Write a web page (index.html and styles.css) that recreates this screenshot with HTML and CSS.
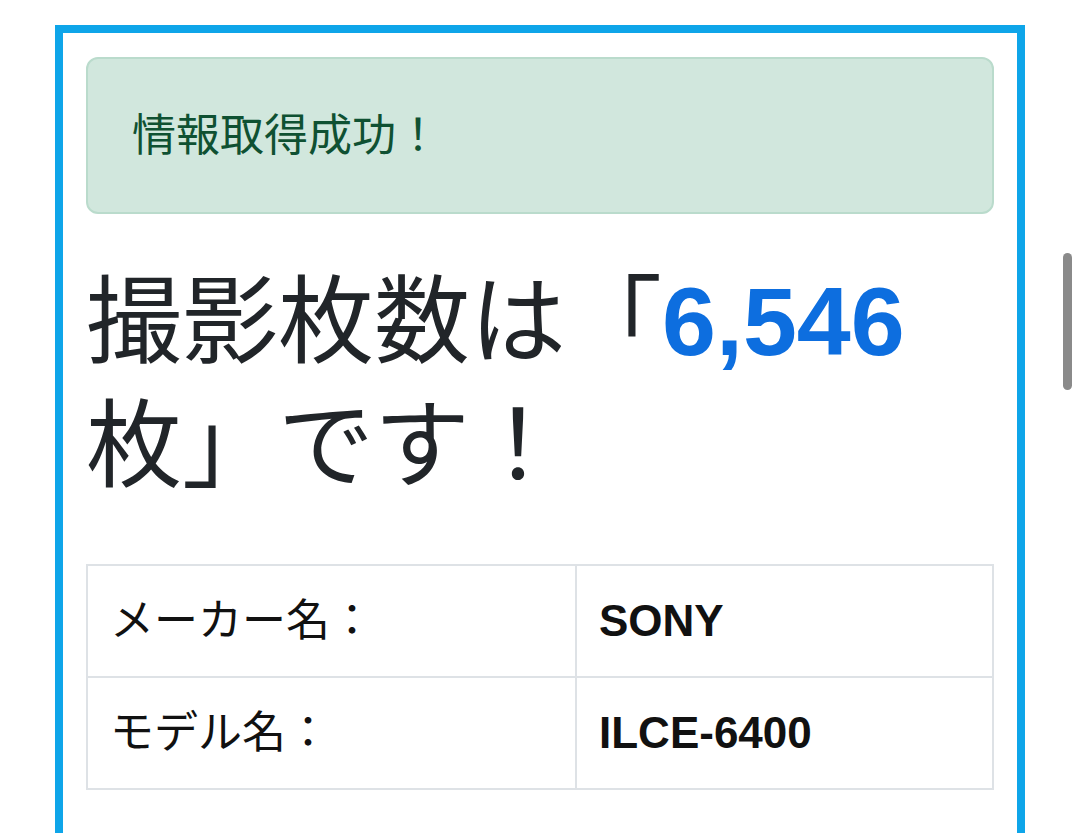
FILE: index.html
```html
<!DOCTYPE html>
<html lang="ja">
<head>
	<meta charset="utf-8">
	<title>撮影枚数チェッカー</title>
	<link rel="stylesheet" href="styles.css">
</head>
<body>
	<div class="result_box">
		<div class="alert_success">情報取得成功！</div>

		<h1 class="shot_count">撮影枚数は「<span class="shot_count_value">6,546</span>枚」です！</h1>

		<table class="camera_info">
			<tr>
				<td class="camera_info_key">メーカー名：</td>
				<td class="camera_info_value">SONY</td>
			</tr>
			<tr>
				<td class="camera_info_key">モデル名：</td>
				<td class="camera_info_value">ILCE-6400</td>
			</tr>
		</table>
	</div>

	<div class="scroll_thumb"></div>
</body>
</html>
```

FILE: styles.css
```css
html, body {
	height: 100%;
	overflow: hidden;
}

body {
	margin: 0;
	padding-top: 25px;
	background-color: #FFFFFF;
	color: #212529;
	font-family: "Liberation Sans", "Noto Sans CJK JP", sans-serif;
	font-size: 44px;
}

.result_box {
	width: 970px;
	margin: 0 auto;
	padding: 24px 23px 80px 23px;
	border: 8px solid #0EA5E9;
	box-sizing: border-box;
}

.alert_success {
	padding: 44px 44px;
	line-height: 65px;
	color: #0F5132;
	background-color: #D1E7DD;
	border: 2px solid #BADBCC;
	border-radius: 12px;
	margin-bottom: 46px;
}

.shot_count {
	margin: 0 0 56px 0;
	font-size: 96px;
	font-weight: normal;
	line-height: 124px;
}

.shot_count_value {
	color: #0D6EDF;
	font-weight: bold;
	font-size: 97px;
}

.camera_info {
	width: 100%;
	border-collapse: collapse;
	border: 2px solid #DEE2E6;
}

.camera_info td {
	border: 2px solid #DEE2E6;
	padding: 23px 22px;
	line-height: 64px;
	color: #111111;
}

.camera_info_key {
	width: 443px;
}

.camera_info_value {
	font-weight: bold;
}

/* overlay scrollbar thumb */
.scroll_thumb {
	position: fixed;
	left: 1063px;
	top: 253px;
	width: 9px;
	height: 137px;
	border-radius: 5px;
	background-color: #8A8A8A;
}
```
